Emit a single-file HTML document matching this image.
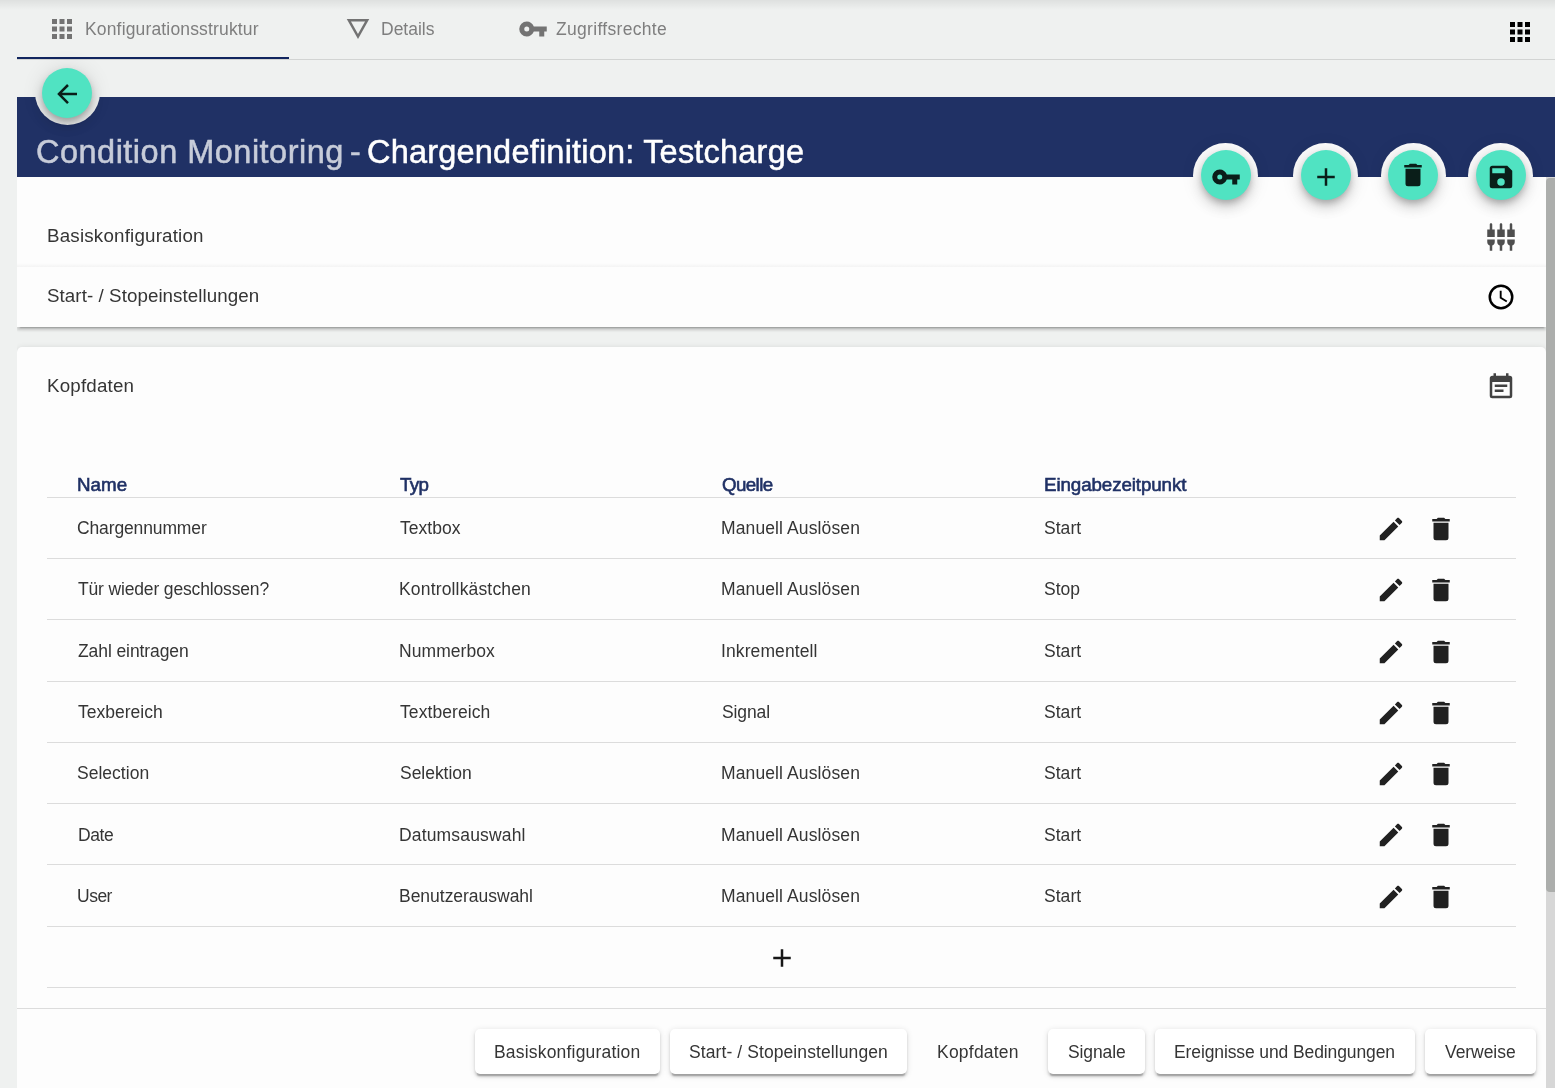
<!DOCTYPE html>
<html lang="de"><head><meta charset="utf-8"><title>Condition Monitoring</title>
<style>
html,body{margin:0;padding:0}
body{width:1555px;height:1088px;overflow:hidden;position:relative;background:#eff1f0;font-family:"Liberation Sans",sans-serif;color:#212121}
.abs,.t,.ic,.ln{position:absolute}
.t{white-space:pre;line-height:1;margin:0;will-change:transform}
.ic{display:block;overflow:visible}
.ln{height:1px;background:#dcdcdc;left:47px;width:1469px}
.card{position:absolute;background:#fdfdfd}
.fab{position:absolute;width:50px;height:50px;border-radius:50%;background:#50e3c2;box-shadow:0 4px 6px -1px rgba(0,0,0,.2),0 7.5px 12.5px 0 rgba(0,0,0,.14),0 1px 22px 0 rgba(0,0,0,.12)}
.ring{position:absolute;width:65px;height:65px;border-radius:50%}
.btn{position:absolute;top:1029px;height:45px;border-radius:5px;background:#fff;box-shadow:0 4px 1.25px -2.5px rgba(0,0,0,.2),0 2.5px 2.5px 0 rgba(0,0,0,.14),0 1.25px 6px 0 rgba(0,0,0,.12)}
</style></head><body>

<div class="abs" style="left:0;top:0;width:1555px;height:10px;background:linear-gradient(rgba(0,0,0,.07),rgba(0,0,0,0))"></div>
<div class="abs" style="left:17px;top:59px;width:1538px;height:1px;background:#d2d4d3"></div>
<div class="abs" style="left:17px;top:57px;width:272px;height:2px;background:#12265f"></div>
<svg class="ic " style="left:47.00px;top:14.00px;width:30px;height:30px" viewBox="0 0 24 24"><path fill="#737373" d="M16,20H20V16H16M16,14H20V10H16M10,8H14V4H10M16,8H20V4H16M10,14H14V10H10M4,14H8V10H4M4,20H8V16H4M10,20H14V16H10M4,8H8V4H4V8Z"/></svg>
<svg class="ic " style="left:343.00px;top:14.00px;width:30px;height:30px" viewBox="0 0 24 24"><path fill="#737373" d="M6.38,6H17.63L12,16L6.38,6M3,4L12,20L21,4H3Z"/></svg>
<svg class="ic " style="left:517.90px;top:14.00px;width:30px;height:30px" viewBox="0 0 24 24"><path fill="#737373" d="M7,14A2,2 0 0,1 5,12A2,2 0 0,1 7,10A2,2 0 0,1 9,12A2,2 0 0,1 7,14M12.65,10C11.83,7.67 9.61,6 7,6A6,6 0 0,0 1,12A6,6 0 0,0 7,18C9.61,18 11.83,16.33 12.65,14H17V18H21V14H23V10H12.65Z"/></svg>
<svg class="ic " style="left:1505.00px;top:16.70px;width:30px;height:30px" viewBox="0 0 24 24"><path fill="#000" d="M16,20H20V16H16M16,14H20V10H16M10,8H14V4H10M16,8H20V4H16M10,14H14V10H10M4,14H8V10H4M4,20H8V16H4M10,20H14V16H10M4,8H8V4H4V8Z"/></svg>
<div class="abs" style="left:17px;top:97px;width:1538px;height:80px;background:#203165"></div>
<div class="abs" style="left:17px;top:177px;width:1529px;height:911px;overflow:hidden">
<div class="card" style="left:0;top:-10px;width:1529px;height:160px;box-shadow:0 3.75px 1.25px -2.5px rgba(0,0,0,.2),0 2.5px 2.5px 0 rgba(0,0,0,.14),0 1.25px 6.25px 0 rgba(0,0,0,.12)"></div>
<div class="abs" style="left:0;top:86px;width:1529px;height:4px;background:linear-gradient(rgba(0,0,0,0),rgba(0,0,0,.035))"></div>
<div class="card" style="left:0;top:170px;width:1529px;height:760px;border-radius:5px 5px 0 0;box-shadow:0 3.75px 1.25px -2.5px rgba(0,0,0,.2),0 2.5px 2.5px 0 rgba(0,0,0,.14),0 1.25px 6.25px 0 rgba(0,0,0,.12)"></div>
</div>
<div class="abs" style="left:17px;top:1007.5px;width:1529px;height:1.3px;background:#dcdcdc"></div>
<div class="abs" style="left:1546px;top:177px;width:9px;height:911px;background:#d7d7d7"></div>
<div class="abs" style="left:1546px;top:177.6px;width:9px;height:714px;background:#acaeac;border-radius:4px 0 0 4px"></div>
<div class="ring" style="left:35.1px;top:59.8px;background:#eff1f0;"></div>
<div class="fab" style="left:42px;top:68px"></div>
<svg class="ic " style="left:51.70px;top:79.00px;width:30px;height:30px" viewBox="0 0 24 24"><path fill="#0a1e19" d="M20,11V13H8L13.5,18.5L12.08,19.92L4.16,12L12.08,4.08L13.5,5.5L8,11H20Z"/></svg>
<div class="ring" style="left:1192.85px;top:142.8px;width:65.3px;height:65.3px;background:#fdfdfd"></div>
<div class="fab" style="left:1201.00px;top:150px"></div>
<svg class="ic " style="left:1210.50px;top:162.00px;width:30px;height:30px" viewBox="0 0 24 24"><path fill="#0a1e19" d="M7,14A2,2 0 0,1 5,12A2,2 0 0,1 7,10A2,2 0 0,1 9,12A2,2 0 0,1 7,14M12.65,10C11.83,7.67 9.61,6 7,6A6,6 0 0,0 1,12A6,6 0 0,0 7,18C9.61,18 11.83,16.33 12.65,14H17V18H21V14H23V10H12.65Z"/></svg>
<div class="ring" style="left:1292.85px;top:142.8px;width:65.3px;height:65.3px;background:#fdfdfd"></div>
<div class="fab" style="left:1301.10px;top:150px"></div>
<svg class="ic " style="left:1310.50px;top:162.00px;width:30px;height:30px" viewBox="0 0 24 24"><path fill="#0a1e19" d="M19,13H13V19H11V13H5V11H11V5H13V11H19V13Z"/></svg>
<div class="ring" style="left:1380.75px;top:142.8px;width:65.3px;height:65.3px;background:#fdfdfd"></div>
<div class="fab" style="left:1388.10px;top:150px"></div>
<svg class="ic " style="left:1398.00px;top:160.00px;width:30px;height:30px" viewBox="0 0 24 24"><path fill="#0a1e19" d="M19,4H15.5L14.5,3H9.5L8.5,4H5V6H19M6,19A2,2 0 0,0 8,21H16A2,2 0 0,0 18,19V7H6V19Z"/></svg>
<div class="ring" style="left:1467.85px;top:142.8px;width:65.3px;height:65.3px;background:#fdfdfd"></div>
<div class="fab" style="left:1476.00px;top:150px"></div>
<svg class="ic " style="left:1485.60px;top:162.00px;width:30px;height:30px" viewBox="0 0 24 24"><path fill="#0a1e19" d="M15,9H5V5H15M12,19A3,3 0 0,1 9,16A3,3 0 0,1 12,13A3,3 0 0,1 15,16A3,3 0 0,1 12,19M17,3H5C3.89,3 3,3.9 3,5V19A2,2 0 0,0 5,21H19A2,2 0 0,0 21,19V7L17,3Z"/></svg>
<svg class="ic " style="left:1486.00px;top:221.75px;width:30px;height:30px" viewBox="0 0 24 24"><path fill="#4f4f4f" d="M5 2c0-.55-.45-1-1-1s-1 .45-1 1v4H1v6h6V6H5V2zm4 14c0 1.3.84 2.4 2 2.82V23h2v-4.18c1.16-.41 2-1.51 2-2.82v-2H9v2zm-8 0c0 1.3.84 2.4 2 2.82V23h2v-4.18C6.16 18.4 7 17.3 7 16v-2H1v2zM21 6V2c0-.55-.45-1-1-1s-1 .45-1 1v4h-2v6h6V6h-2zm-8-4c0-.55-.45-1-1-1s-1 .45-1 1v4H9v6h6V6h-2V2zm4 14c0 1.3.84 2.4 2 2.82V23h2v-4.18c1.16-.41 2-1.51 2-2.82v-2h-6v2z"/></svg>
<svg class="ic " style="left:1486.00px;top:281.90px;width:30px;height:30px" viewBox="0 0 24 24"><path fill="#000" d="M12,20A8,8 0 0,0 20,12A8,8 0 0,0 12,4A8,8 0 0,0 4,12A8,8 0 0,0 12,20M12,2A10,10 0 0,1 22,12A10,10 0 0,1 12,22C6.47,22 2,17.5 2,12A10,10 0 0,1 12,2M12.5,7V12.25L17,14.92L16.25,16.15L11,13V7H12.5Z"/></svg>
<svg class="ic " style="left:1486.10px;top:371.70px;width:30px;height:30px" viewBox="0 0 24 24"><path fill="#424242" d="M14,14H7V16H14M19,19H5V8H19M19,3H18V1H16V3H8V1H6V3H5C3.89,3 3,3.9 3,5V19A2,2 0 0,0 5,21H19A2,2 0 0,0 21,19V5A2,2 0 0,0 19,3M17,10H7V12H17V10Z"/></svg>
<div class="ln" style="top:497px"></div>
<div class="ln" style="top:558px"></div>
<div class="ln" style="top:619px"></div>
<div class="ln" style="top:681px"></div>
<div class="ln" style="top:742px"></div>
<div class="ln" style="top:803px"></div>
<div class="ln" style="top:864px"></div>
<div class="ln" style="top:926px"></div>
<div class="ln" style="top:987px"></div>
<svg class="ic " style="left:1376.00px;top:513.85px;width:30px;height:30px" viewBox="0 0 24 24"><path fill="#212121" d="M20.71,7.04C21.1,6.65 21.1,6 20.71,5.63L18.37,3.29C18,2.9 17.35,2.9 16.96,3.29L15.12,5.12L18.87,8.87M3,17.25V21H6.75L17.81,9.93L14.06,6.18L3,17.25Z"/></svg>
<svg class="ic " style="left:1426.00px;top:513.85px;width:30px;height:30px" viewBox="0 0 24 24"><path fill="#212121" d="M19,4H15.5L14.5,3H9.5L8.5,4H5V6H19M6,19A2,2 0 0,0 8,21H16A2,2 0 0,0 18,19V7H6V19Z"/></svg>
<svg class="ic " style="left:1376.00px;top:574.95px;width:30px;height:30px" viewBox="0 0 24 24"><path fill="#212121" d="M20.71,7.04C21.1,6.65 21.1,6 20.71,5.63L18.37,3.29C18,2.9 17.35,2.9 16.96,3.29L15.12,5.12L18.87,8.87M3,17.25V21H6.75L17.81,9.93L14.06,6.18L3,17.25Z"/></svg>
<svg class="ic " style="left:1426.00px;top:574.95px;width:30px;height:30px" viewBox="0 0 24 24"><path fill="#212121" d="M19,4H15.5L14.5,3H9.5L8.5,4H5V6H19M6,19A2,2 0 0,0 8,21H16A2,2 0 0,0 18,19V7H6V19Z"/></svg>
<svg class="ic " style="left:1376.00px;top:636.80px;width:30px;height:30px" viewBox="0 0 24 24"><path fill="#212121" d="M20.71,7.04C21.1,6.65 21.1,6 20.71,5.63L18.37,3.29C18,2.9 17.35,2.9 16.96,3.29L15.12,5.12L18.87,8.87M3,17.25V21H6.75L17.81,9.93L14.06,6.18L3,17.25Z"/></svg>
<svg class="ic " style="left:1426.00px;top:636.80px;width:30px;height:30px" viewBox="0 0 24 24"><path fill="#212121" d="M19,4H15.5L14.5,3H9.5L8.5,4H5V6H19M6,19A2,2 0 0,0 8,21H16A2,2 0 0,0 18,19V7H6V19Z"/></svg>
<svg class="ic " style="left:1376.00px;top:697.80px;width:30px;height:30px" viewBox="0 0 24 24"><path fill="#212121" d="M20.71,7.04C21.1,6.65 21.1,6 20.71,5.63L18.37,3.29C18,2.9 17.35,2.9 16.96,3.29L15.12,5.12L18.87,8.87M3,17.25V21H6.75L17.81,9.93L14.06,6.18L3,17.25Z"/></svg>
<svg class="ic " style="left:1426.00px;top:697.80px;width:30px;height:30px" viewBox="0 0 24 24"><path fill="#212121" d="M19,4H15.5L14.5,3H9.5L8.5,4H5V6H19M6,19A2,2 0 0,0 8,21H16A2,2 0 0,0 18,19V7H6V19Z"/></svg>
<svg class="ic " style="left:1376.00px;top:758.85px;width:30px;height:30px" viewBox="0 0 24 24"><path fill="#212121" d="M20.71,7.04C21.1,6.65 21.1,6 20.71,5.63L18.37,3.29C18,2.9 17.35,2.9 16.96,3.29L15.12,5.12L18.87,8.87M3,17.25V21H6.75L17.81,9.93L14.06,6.18L3,17.25Z"/></svg>
<svg class="ic " style="left:1426.00px;top:758.85px;width:30px;height:30px" viewBox="0 0 24 24"><path fill="#212121" d="M19,4H15.5L14.5,3H9.5L8.5,4H5V6H19M6,19A2,2 0 0,0 8,21H16A2,2 0 0,0 18,19V7H6V19Z"/></svg>
<svg class="ic " style="left:1376.00px;top:819.90px;width:30px;height:30px" viewBox="0 0 24 24"><path fill="#212121" d="M20.71,7.04C21.1,6.65 21.1,6 20.71,5.63L18.37,3.29C18,2.9 17.35,2.9 16.96,3.29L15.12,5.12L18.87,8.87M3,17.25V21H6.75L17.81,9.93L14.06,6.18L3,17.25Z"/></svg>
<svg class="ic " style="left:1426.00px;top:819.90px;width:30px;height:30px" viewBox="0 0 24 24"><path fill="#212121" d="M19,4H15.5L14.5,3H9.5L8.5,4H5V6H19M6,19A2,2 0 0,0 8,21H16A2,2 0 0,0 18,19V7H6V19Z"/></svg>
<svg class="ic " style="left:1376.00px;top:881.80px;width:30px;height:30px" viewBox="0 0 24 24"><path fill="#212121" d="M20.71,7.04C21.1,6.65 21.1,6 20.71,5.63L18.37,3.29C18,2.9 17.35,2.9 16.96,3.29L15.12,5.12L18.87,8.87M3,17.25V21H6.75L17.81,9.93L14.06,6.18L3,17.25Z"/></svg>
<svg class="ic " style="left:1426.00px;top:881.80px;width:30px;height:30px" viewBox="0 0 24 24"><path fill="#212121" d="M19,4H15.5L14.5,3H9.5L8.5,4H5V6H19M6,19A2,2 0 0,0 8,21H16A2,2 0 0,0 18,19V7H6V19Z"/></svg>
<svg class="ic " style="left:766.80px;top:942.90px;width:30px;height:30px" viewBox="0 0 24 24"><path fill="#161616" d="M19,13H13V19H11V13H5V11H11V5H13V11H19V13Z"/></svg>
<div class="btn" style="left:475px;width:185px"></div>
<div class="btn" style="left:670px;width:237px"></div>
<div class="btn" style="left:1048px;width:97px"></div>
<div class="btn" style="left:1155px;width:260px"></div>
<div class="btn" style="left:1425px;width:111px"></div>
<div class="t" style="left:84.80px;top:21.29px;font-size:17.5px;color:#7e7e7e;letter-spacing:0.157px">Konfigurationsstruktur</div>
<div class="t" style="left:380.80px;top:21.29px;font-size:17.5px;color:#7e7e7e;letter-spacing:-0.008px">Details</div>
<div class="t" style="left:556.10px;top:21.29px;font-size:17.5px;color:#7e7e7e;letter-spacing:0.308px">Zugriffsrechte</div>
<div class="t" style="left:35.50px;top:136.29px;font-size:32.5px;color:#c7ccd9;letter-spacing:0.487px;-webkit-text-stroke:0.5px #c7ccd9">Condition Monitoring</div>
<div class="t" style="left:349.90px;top:134.51px;font-size:32px;color:#c7ccd9;letter-spacing:0px;-webkit-text-stroke:0.6px #c7ccd9">-</div>
<div class="t" style="left:367.20px;top:136.29px;font-size:32.5px;color:#ffffff;letter-spacing:0.207px;-webkit-text-stroke:0.5px #ffffff">Chargendefinition: Testcharge</div>
<div class="t" style="left:46.70px;top:226.63px;font-size:18.75px;color:#353535;letter-spacing:0.194px">Basiskonfiguration</div>
<div class="t" style="left:46.90px;top:286.63px;font-size:18.75px;color:#353535;letter-spacing:0.066px">Start- / Stopeinstellungen</div>
<div class="t" style="left:46.70px;top:376.83px;font-size:18.75px;color:#353535;letter-spacing:0.181px">Kopfdaten</div>
<div class="t" style="left:76.75px;top:475.73px;font-size:18.75px;color:#203165;letter-spacing:0.017px;-webkit-text-stroke:0.6px #203165">Name</div>
<div class="t" style="left:399.65px;top:475.73px;font-size:18.75px;color:#203165;letter-spacing:-0.625px;-webkit-text-stroke:0.6px #203165">Typ</div>
<div class="t" style="left:722.00px;top:475.73px;font-size:18.75px;color:#203165;letter-spacing:-0.61px;-webkit-text-stroke:0.6px #203165">Quelle</div>
<div class="t" style="left:1043.55px;top:475.73px;font-size:18.75px;color:#203165;letter-spacing:-0.097px;-webkit-text-stroke:0.6px #203165">Eingabezeitpunkt</div>
<div class="t" style="left:77.10px;top:520.19px;font-size:17.5px;color:#353535;letter-spacing:-0.133px">Chargennummer</div>
<div class="t" style="left:400.00px;top:520.19px;font-size:17.5px;color:#353535;letter-spacing:0.017px">Textbox</div>
<div class="t" style="left:721.30px;top:520.19px;font-size:17.5px;color:#353535;letter-spacing:0.113px">Manuell Auslösen</div>
<div class="t" style="left:1043.60px;top:520.19px;font-size:17.5px;color:#353535;letter-spacing:0.038px">Start</div>
<div class="t" style="left:77.60px;top:581.44px;font-size:17.5px;color:#353535;letter-spacing:-0.155px">Tür wieder geschlossen?</div>
<div class="t" style="left:399.00px;top:581.44px;font-size:17.5px;color:#353535;letter-spacing:0.163px">Kontrollkästchen</div>
<div class="t" style="left:721.30px;top:581.44px;font-size:17.5px;color:#353535;letter-spacing:0.113px">Manuell Auslösen</div>
<div class="t" style="left:1043.60px;top:581.44px;font-size:17.5px;color:#353535;letter-spacing:-0.017px">Stop</div>
<div class="t" style="left:77.60px;top:642.69px;font-size:17.5px;color:#353535;letter-spacing:-0.088px">Zahl eintragen</div>
<div class="t" style="left:399.00px;top:642.69px;font-size:17.5px;color:#353535;letter-spacing:0.062px">Nummerbox</div>
<div class="t" style="left:721.30px;top:642.69px;font-size:17.5px;color:#353535;letter-spacing:0.095px">Inkrementell</div>
<div class="t" style="left:1043.60px;top:642.69px;font-size:17.5px;color:#353535;letter-spacing:0.038px">Start</div>
<div class="t" style="left:77.60px;top:703.94px;font-size:17.5px;color:#353535;letter-spacing:0.0px">Texbereich</div>
<div class="t" style="left:400.00px;top:703.94px;font-size:17.5px;color:#353535;letter-spacing:0.075px">Textbereich</div>
<div class="t" style="left:721.80px;top:703.94px;font-size:17.5px;color:#353535;letter-spacing:-0.12px">Signal</div>
<div class="t" style="left:1043.60px;top:703.94px;font-size:17.5px;color:#353535;letter-spacing:0.038px">Start</div>
<div class="t" style="left:77.10px;top:765.19px;font-size:17.5px;color:#353535;letter-spacing:0.019px">Selection</div>
<div class="t" style="left:399.50px;top:765.19px;font-size:17.5px;color:#353535;letter-spacing:-0.031px">Selektion</div>
<div class="t" style="left:721.30px;top:765.19px;font-size:17.5px;color:#353535;letter-spacing:0.113px">Manuell Auslösen</div>
<div class="t" style="left:1043.60px;top:765.19px;font-size:17.5px;color:#353535;letter-spacing:0.038px">Start</div>
<div class="t" style="left:77.60px;top:827.29px;font-size:17.5px;color:#353535;letter-spacing:-0.45px">Date</div>
<div class="t" style="left:399.00px;top:827.29px;font-size:17.5px;color:#353535;letter-spacing:0.163px">Datumsauswahl</div>
<div class="t" style="left:721.30px;top:827.29px;font-size:17.5px;color:#353535;letter-spacing:0.113px">Manuell Auslösen</div>
<div class="t" style="left:1043.60px;top:827.29px;font-size:17.5px;color:#353535;letter-spacing:0.038px">Start</div>
<div class="t" style="left:76.85px;top:887.69px;font-size:17.5px;color:#353535;letter-spacing:-0.5px">User</div>
<div class="t" style="left:399.00px;top:887.69px;font-size:17.5px;color:#353535;letter-spacing:-0.021px">Benutzerauswahl</div>
<div class="t" style="left:721.30px;top:887.69px;font-size:17.5px;color:#353535;letter-spacing:0.113px">Manuell Auslösen</div>
<div class="t" style="left:1043.60px;top:887.69px;font-size:17.5px;color:#353535;letter-spacing:0.038px">Start</div>
<div class="t" style="left:493.80px;top:1043.89px;font-size:17.5px;color:#353535;letter-spacing:0.191px">Basiskonfiguration</div>
<div class="t" style="left:689.30px;top:1043.89px;font-size:17.5px;color:#353535;letter-spacing:0.09px">Start- / Stopeinstellungen</div>
<div class="t" style="left:936.70px;top:1043.89px;font-size:17.5px;color:#353535;letter-spacing:0.219px">Kopfdaten</div>
<div class="t" style="left:1067.60px;top:1043.89px;font-size:17.5px;color:#353535;letter-spacing:-0.117px">Signale</div>
<div class="t" style="left:1174.30px;top:1043.89px;font-size:17.5px;color:#353535;letter-spacing:-0.11px">Ereignisse und Bedingungen</div>
<div class="t" style="left:1445.45px;top:1043.89px;font-size:17.5px;color:#353535;letter-spacing:-0.057px">Verweise</div>
</body></html>
